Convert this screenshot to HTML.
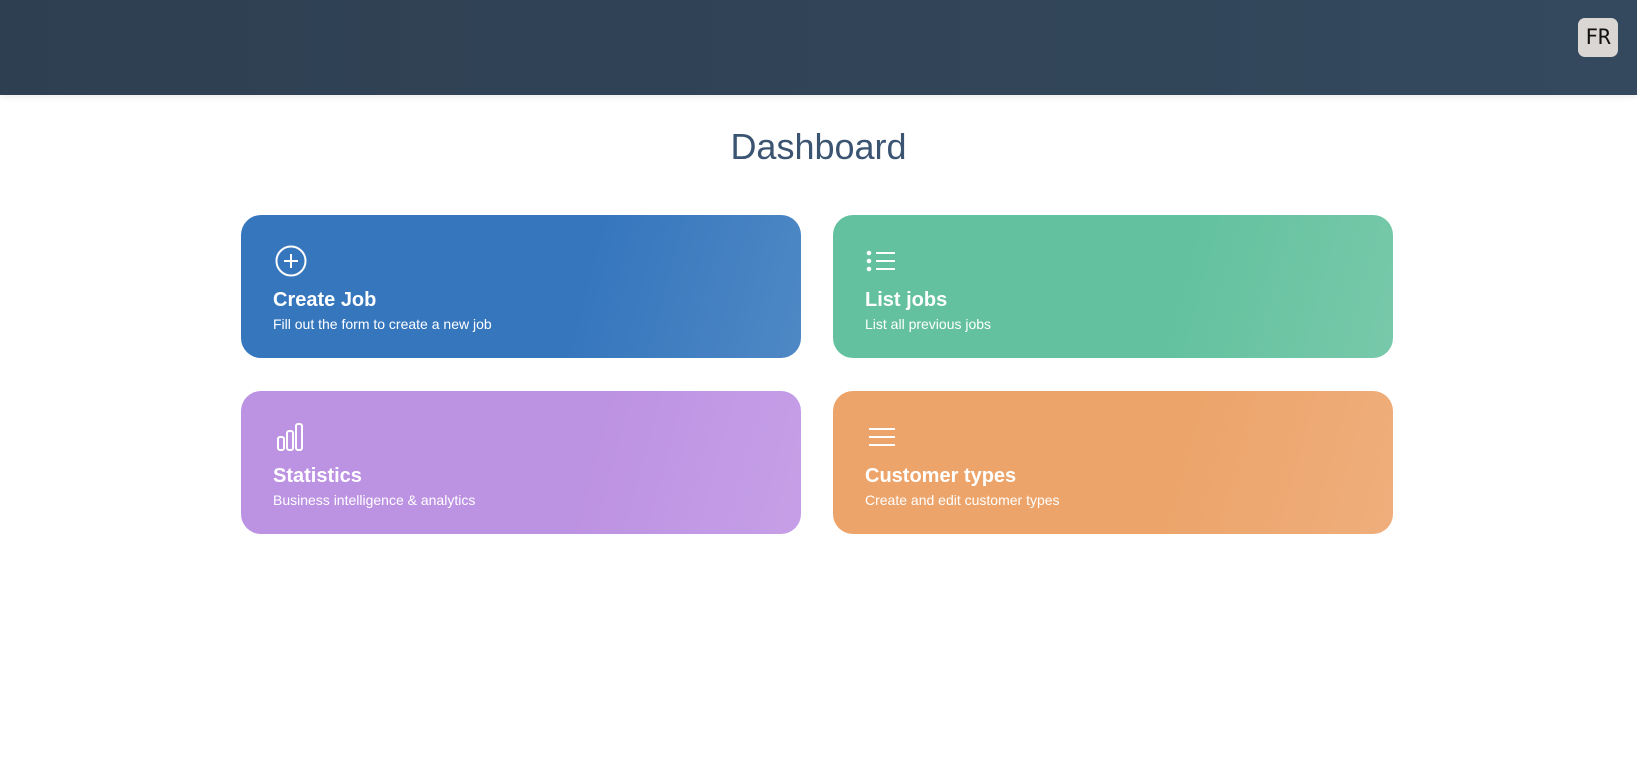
<!DOCTYPE html>
<html><head><style>
body{margin:0;width:1637px;height:768px;background:#fff;font-family:"Liberation Sans",sans-serif;overflow:hidden;position:relative}
.hdr{position:absolute;left:0;top:0;width:1637px;height:95px;background:linear-gradient(90deg,#2e3f51,#34495e);box-shadow:0 2px 6px rgba(0,0,0,.08)}
.fr{position:absolute;left:1578px;top:18px;width:40px;height:39px;background:#d9d6d3;border-radius:7px;font-family:"DejaVu Sans Mono","Liberation Mono",monospace;font-size:21px;line-height:39px;text-align:center;color:#111}
h1{position:absolute;left:0;width:1637px;top:126px;margin:0;text-align:center;font-weight:400;font-size:36px;color:#3b5471}
.c{position:absolute;width:560px;height:143px;border-radius:20px;color:#fff}
.c svg{position:absolute;left:0;top:0}
.t{position:absolute;left:32px;top:74px;font-size:20px;font-weight:bold}
.s{position:absolute;left:32px;top:101px;font-size:14px}
</style></head><body>
<div class="hdr"><div class="fr">FR</div></div>
<h1>Dashboard</h1>
<div class="c" style="left:241px;top:215px;background:linear-gradient(105deg,#3676bd 60%,#4e88c5)">
<svg width="80" height="70" fill="none" stroke="#fff" stroke-width="2"><circle cx="50" cy="46" r="14.5"/><path d="M50 39v14M43 46h14"/></svg>
<div class="t">Create Job</div><div class="s">Fill out the form to create a new job</div></div>
<div class="c" style="left:833px;top:215px;background:linear-gradient(105deg,#63c19f 60%,#77c9aa)">
<svg width="80" height="70" fill="none" stroke="#fff" stroke-width="2"><path d="M43 38h19M43 46h19M43 54h19"/><circle cx="36" cy="38" r="1.3" fill="#fff"/><circle cx="36" cy="46" r="1.3" fill="#fff"/><circle cx="36" cy="54" r="1.3" fill="#fff"/></svg>
<div class="t">List jobs</div><div class="s">List all previous jobs</div></div>
<div class="c" style="left:241px;top:391px;background:linear-gradient(105deg,#bc92e2 60%,#c69fe7)">
<svg width="80" height="70" fill="none" stroke="#fff" stroke-width="2"><rect x="37" y="46" width="6" height="13" rx="2"/><rect x="46" y="40" width="6" height="19" rx="2"/><rect x="55" y="33" width="6" height="26" rx="2"/></svg>
<div class="t">Statistics</div><div class="s">Business intelligence &amp; analytics</div></div>
<div class="c" style="left:833px;top:391px;background:linear-gradient(105deg,#eca46a 60%,#efae7c)">
<svg width="80" height="70" fill="none" stroke="#fff" stroke-width="2"><path d="M36 38h26M36 46h26M36 54h26"/></svg>
<div class="t">Customer types</div><div class="s">Create and edit customer types</div></div>
</body></html>
